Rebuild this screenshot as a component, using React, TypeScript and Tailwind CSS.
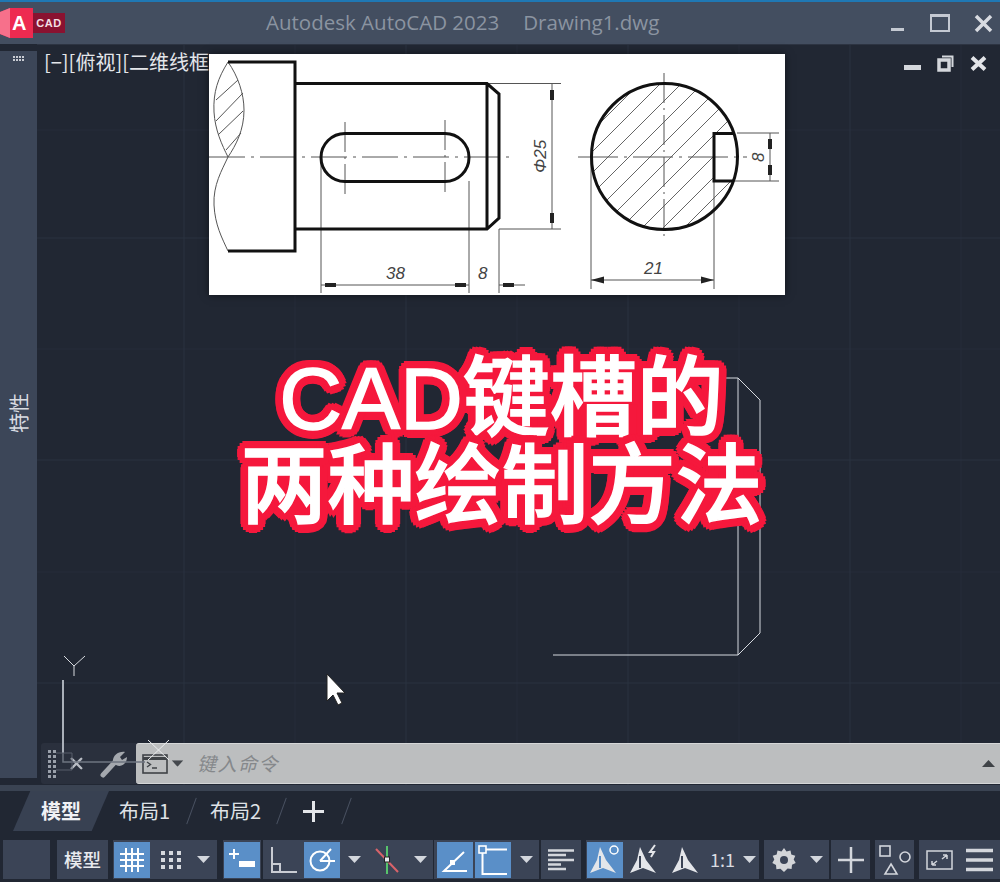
import * as React from "react"
import { X } from "lucide-react"

const Caret = ({ up = false, className = "" }: { up?: boolean; className?: string }) => (
  <svg width="13" height="7" viewBox="0 0 13 7" className={`shrink-0 ${className}`}>
    <path d={up ? "M6.5 0L13 7H0z" : "M0 0h13L6.5 7z"} fill="currentColor" />
  </svg>
)

const hatchLines = [723, 744, 765, 786, 807, 828, 849, 870, 891, 912]

const ShaftDrawing = () => (
  <svg viewBox="209 54 576 241" className="w-full h-full">
    <defs>
      <clipPath id="section">
        <circle cx="664.5" cy="156.5" r="73" />
      </clipPath>
    </defs>
    {/* hatching first, outlines sit on top */}
    <g clipPath="url(#section)" stroke="#666" strokeWidth="1">
      {hatchLines.map((c) => (
        <line key={c} x1={c - 300} y1="300" x2={c} y2="0" />
      ))}
    </g>
    <rect x="714" y="134" width="26" height="47" fill="#fff" />

    <g fill="none" stroke="#555" strokeWidth="1">
      <path d="M228 62C218 78 213 92 214 112C215 130 222 145 228 157C222 170 213 185 214 205C215 225 222 238 228 251" />
      <path d="M228 62C238 76 244 94 244 110C244 130 236 145 228 157" />
      <path d="M216 100L238 80M216 121L243 93M218 135L243 111M226 150L241 133" />
      <path d="M321 157V293M469 181V293M499 229V293" />
      <path d="M487 83.5H561M499 229H561M321 285H469M499 285H525M552 84V229" />
      <path d="M591 157V289M714 181V289M591 280H714" />
      <path d="M737 133H779M733 181H779M770 133V181" />
      <path d="M345 122V197M445 120V192M664 73V238" strokeDasharray="30 5 2 5" />
      <path d="M209 157H514" strokeDasharray="36 6 3 6" />
      <path d="M578 157H747" strokeDasharray="40 6 3 6" />
    </g>

    <g fill="none" stroke="#111" strokeWidth="3">
      <path d="M228 62H295V251H228" />
      <path d="M295 83.5H487L499 94V218L487 229H295M487 83.5V229" />
      <rect x="321" y="133.5" width="148" height="48" rx="24" />
      <circle cx="664.5" cy="156.5" r="73" />
      <path d="M733 133.5H714V181H733" />
    </g>

    <g fill="#222">
      <path d="M325 283h11v4h-11zM455 283h11v4h-11zM503 283h11v4h-11z" />
      <path d="M550 90h4v10h-4zM550 213h4v10h-4zM768 139h4v10h-4zM768 165h4v10h-4z" />
      <path d="M591 280l13-3.5v7zM714 280l-13-3.5v7z" />
    </g>

    <g fill="#444" fontStyle="italic" fontSize="17" fontFamily="'Liberation Sans', sans-serif">
      <text x="386" y="279">38</text>
      <text x="478" y="279">8</text>
      <text x="644" y="274">21</text>
      <text transform="translate(546 173) rotate(-90)">Φ25</text>
      <text transform="translate(764 162) rotate(-90)">8</text>
    </g>
  </svg>
)

const StatusGroup = ({ children, className = "" }: { children: React.ReactNode; className?: string }) => (
  <div className={`h-[39px] bg-[#3b4456] flex items-center shrink-0 ${className}`}>{children}</div>
)

const Active = ({ children, className = "" }: { children: React.ReactNode; className?: string }) => (
  <div className={`h-[36px] bg-[#5a8fc8] flex items-center justify-center shrink-0 ${className}`}>{children}</div>
)

const Drop = ({ className = "" }: { className?: string }) => <Caret className={`text-[#d3d7dd] ${className}`} />

const Annotate = ({ extra }: { extra?: React.ReactNode }) => (
  <svg width="36" height="32" viewBox="0 0 36 32" className="shrink-0">
    <path d="M13 3L19 16L29 29L16 24L3 29L10 16z" fill="#e4e6ea" />
    <path d="M13 12v12" stroke="currentColor" strokeWidth="2" />
    {extra}
  </svg>
)

const App = () => {
  return (
    <div className="relative w-[1000px] h-[882px] overflow-hidden flex flex-col bg-[#212733] font-['Noto_Sans_CJK_SC','Noto_Sans',sans-serif] text-[#e8eaee]">
      {/* Title bar */}
      <header className="h-[44px] shrink-0 flex items-center border-t-2 border-[#1f78b4] bg-[#434e60] relative">
        <div className="flex items-center">
          <svg width="33" height="30" viewBox="0 0 33 30">
            <path d="M0 4L10 0H33V30H10L0 26z" fill="#ee2a50" />
            <path d="M0 4L10 0V30L0 26z" fill="#f7708b" />
            <text x="12" y="22" fill="#fff" fontSize="20" fontWeight="700" fontFamily="'Liberation Sans', sans-serif">A</text>
          </svg>
          <div className="w-[32px] h-[20px] bg-[#8a1230] flex items-center justify-center text-[#f3dfe3] text-[11px] font-bold tracking-[0.5px] font-['Liberation_Sans',sans-serif]">CAD</div>
        </div>
        <div className="absolute left-[266px] top-[5px] flex gap-[24px] text-[20.5px] text-[#8b94a1] font-['Open_Sans',sans-serif] whitespace-nowrap">
          <span>Autodesk AutoCAD 2023</span>
          <span>Drawing1.dwg</span>
        </div>
        <div className="ml-auto flex items-center pr-[5px]">
          <div className="w-[13px] h-[3px] bg-[#c4c9d2] mt-[13px] mr-[26px]" />
          <div className="w-[20px] h-[18px] border-2 border-t-[3px] border-[#c4c9d2] mr-[24px]" />
          <svg width="19" height="19" viewBox="0 0 19 19" className="mr-[2px]">
            <path d="M2 2L17 17M17 2L2 17" stroke="#d8dbe1" strokeWidth="3.5" />
          </svg>
        </div>
      </header>

      <div className="flex-1 flex min-h-0">
        {/* Collapsed properties palette */}
        <aside className="w-[37px] shrink-0 mt-[7px] mb-[7px] bg-[#3c4658] flex flex-col items-center">
          <div className="mt-[5px] grid grid-cols-4 gap-[1px]">
            {Array.from({ length: 8 }).map((_, i) => (
              <span key={i} className="w-[2px] h-[2px] bg-[#c9ccd3]" />
            ))}
          </div>
          <div className="flex-1 flex items-center justify-center pb-[14px]">
            <span className="[writing-mode:vertical-rl] [text-orientation:sideways] rotate-180 text-[20px] text-[#d9dce2]">特性</span>
          </div>
        </aside>

        {/* Drawing canvas */}
        <main className="relative flex-1 min-w-0 border-t-[1px] border-[#2d3442]">
          <svg className="absolute inset-0 w-full h-full" viewBox="37 45 963 740" preserveAspectRatio="none">
            <g stroke="#262d3a" strokeWidth="1">
              <path d="M295 45V785M517 45V785M739 45V785M961 45V785" />
              <path d="M37 130H1000M37 349H1000M37 572H1000" />
            </g>
            <g stroke="#2b3341" strokeWidth="1">
              <path d="M184 45V785M406 45V785M628 45V785M850 45V785" />
              <path d="M37 238H1000M37 460H1000M37 683H1000" />
            </g>
            {/* model geometry */}
            <path d="M553 655H738L760 633V400L738 378H720M738 378V655" fill="none" stroke="#d5d9df" strokeWidth="1" />
            {/* cursor */}
            <path d="M327 674V701L333 695L338 705L342 703L337 693H345z" fill="#fff" stroke="#222" strokeWidth="1" />
          </svg>

          <div className="absolute left-[7px] top-[3px] text-[20px] leading-[28px] text-[#e4e6ea] whitespace-nowrap">[−][俯视][二维线框]</div>

          <div className="absolute right-[13px] top-[10px] flex items-center gap-[16px]">
            <div className="w-[17px] h-[5px] bg-[#d4d7dc] mt-[7px]" />
            <svg width="17" height="17" viewBox="0 0 17 17">
              <path d="M5 1.5H15.5V12" fill="none" stroke="#d4d7dc" strokeWidth="2" />
              <rect x="2" y="5" width="10" height="10" fill="none" stroke="#d4d7dc" strokeWidth="3.5" />
            </svg>
            <svg width="17" height="15" viewBox="0 0 17 15">
              <path d="M2 1.5L15 13.5M15 1.5L2 13.5" stroke="#e2e4e8" strokeWidth="4" />
            </svg>
          </div>

          {/* Pasted reference image */}
          <div className="absolute left-[172px] top-[9px] w-[576px] h-[241px] bg-white shadow-[0_0_8px_rgba(0,0,0,0.5)]">
            <ShaftDrawing />
          </div>

          {/* Video caption: round red outline comes from the ring of shadows */}
          <div className="absolute left-0 right-0 top-[310px] pr-[34px] text-center text-white text-[87px] leading-[88px] font-medium font-['Liberation_Sans','Noto_Sans_CJK_SC',sans-serif] [-webkit-text-stroke:1.5px_#fff] [text-shadow:8.5px_0_0_#f5183c,7.9px_3.3px_0_#f5183c,6px_6px_0_#f5183c,3.3px_7.9px_0_#f5183c,0_8.5px_0_#f5183c,-3.3px_7.9px_0_#f5183c,-6px_6px_0_#f5183c,-7.9px_3.3px_0_#f5183c,-8.5px_0_0_#f5183c,-7.9px_-3.3px_0_#f5183c,-6px_-6px_0_#f5183c,-3.3px_-7.9px_0_#f5183c,0_-8.5px_0_#f5183c,3.3px_-7.9px_0_#f5183c,6px_-6px_0_#f5183c,7.9px_-3.3px_0_#f5183c]">
            <div>CAD键槽的</div>
            <div>两种绘制方法</div>
          </div>

          {/* Command line */}
          <div className="absolute left-[4px] right-0 top-[698px] h-[41px] flex items-stretch">
            <div className="w-[95px] shrink-0 bg-[#2a303d] rounded-l-[3px] flex items-center">
              <div className="ml-[7px] grid grid-cols-2 gap-x-[2px] gap-y-[2px]">
                {Array.from({ length: 12 }).map((_, i) => (
                  <span key={i} className="w-[3px] h-[3px] bg-[#9aa0aa]" />
                ))}
              </div>
              <X size={19} strokeWidth={3} className="ml-[11px] shrink-0 text-[#b9bdc4]" />
              <svg width="28" height="28" viewBox="0 0 28 28" className="ml-[14px] shrink-0 text-[#a4a8ae]">
                <path d="M3 25L15 12" stroke="currentColor" strokeWidth="5" strokeLinecap="round" />
                <path d="M13 13C12 6 18 1 25 2L20 7L22 10L27 7C27 13 22 18 16 15z" fill="currentColor" />
              </svg>
            </div>
            <div className="flex-1 bg-[#bcbebf] border-y border-[#d5d7d8] rounded-l-[3px] flex items-center">
              <svg width="26" height="20" viewBox="0 0 26 20" className="ml-[6px]">
                <rect x="1" y="1" width="24" height="18" fill="none" stroke="#3f4347" strokeWidth="1.6" />
                <path d="M1 4.5H25" stroke="#3f4347" strokeWidth="3" />
                <path d="M5 8l3.5 2.5L5 13M10 14h5" fill="none" stroke="#3f4347" strokeWidth="1.4" />
              </svg>
              <Caret className="ml-[3px] text-[#44484d] scale-90" />
              <span className="ml-[13px] text-[19px] italic tracking-[1.5px] text-[#85888b]">键入命令</span>
              <Caret up className="ml-auto mr-[5px] text-[#3f4347]" />
            </div>
          </div>

          {/* UCS icon sits above the command line */}
          <svg className="absolute inset-0 w-full h-full pointer-events-none" viewBox="37 45 963 740" preserveAspectRatio="none">
            <g fill="none" strokeWidth="1">
              <path d="M63 680V753" stroke="#aab0b9" strokeWidth="2" />
              <path d="M63 753V762H145" stroke="#6d7480" strokeWidth="1.5" />
              <path d="M56 753H72V770H56" stroke="#565d6a" />
              <path d="M64 656L74 666L85 656M74 666V676" stroke="#d8dbe0" />
              <path d="M148 740L169 760M169 740L148 760" stroke="#eceef0" />
            </g>
          </svg>
        </main>
      </div>

      {/* Layout tabs */}
      <nav className="h-[50px] shrink-0 flex items-start bg-[#212733] border-t-[6px] border-[#3a4352] text-[20px]">
        <div className="ml-[13px] w-[96px] h-[40px] bg-[#384152] [clip-path:polygon(18%_0,100%_0,82%_100%,0_100%)] flex items-center justify-center font-bold text-[#f0f1f4]">模型</div>
        <div className="h-[40px] flex items-center">
          <span className="ml-[10px] text-[#dfe2e7]">布局1</span>
          <span className="ml-[21px] w-px h-[28px] bg-[#4a5262] rotate-[20deg]" />
          <span className="ml-[18px] text-[#dfe2e7]">布局2</span>
          <span className="ml-[20px] w-px h-[28px] bg-[#4a5262] rotate-[20deg]" />
          <svg width="21" height="21" viewBox="0 0 21 21" className="ml-[21px]">
            <path d="M10.5 0V21M0 10.5H21" stroke="#e4e6ea" strokeWidth="3" />
          </svg>
          <span className="ml-[22px] w-px h-[28px] bg-[#4a5262] rotate-[20deg]" />
        </div>
      </nav>

      {/* Status bar */}
      <footer className="h-[47px] shrink-0 flex items-start pt-[5px] pl-[3px] bg-[#212733]">
        <div className="h-[39px] w-[47px] shrink-0 bg-[#3b4456]" />
        <StatusGroup className="w-[51px] ml-[7px] justify-center text-[18.5px] font-medium text-[#e8eaee]">模型</StatusGroup>
        <StatusGroup className="w-[104px] ml-[5px] px-[1px]">
          <Active className="w-[36px]">
            <svg width="26" height="26" viewBox="0 0 26 26">
              <path d="M7 1V25M13 1V25M19 1V25M1 7H25M1 13H25M1 19H25" stroke="#fff" strokeWidth="2" />
            </svg>
          </Active>
          <svg width="22" height="22" viewBox="0 0 22 22" className="ml-[10px] shrink-0">
            {[2, 9, 16].map((y) => [1, 9, 17].map((x) => <rect key={`${x}-${y}`} x={x} y={y} width="4" height="4" fill="#d6d9de" />))}
          </svg>
          <Drop className="ml-[15px]" />
        </StatusGroup>
        <StatusGroup className="w-[38px] ml-[6px] px-[1px]">
          <Active className="w-[36px]">
            <svg width="28" height="26" viewBox="0 0 28 26">
              <path d="M1 7H11M6 2V12" stroke="#fff" strokeWidth="2" />
              <rect x="11" y="14" width="16" height="6" fill="#fff" />
            </svg>
          </Active>
        </StatusGroup>
        <StatusGroup className="w-[170px] ml-[2px]">
          <svg width="28" height="28" viewBox="0 0 28 28" className="ml-[7px] shrink-0">
            <path d="M2 1V26H27M2 18H10V26" fill="none" stroke="#c9ccd3" strokeWidth="2" />
          </svg>
          <Active className="w-[36px] ml-[6px]">
            <svg width="28" height="28" viewBox="0 0 28 28">
              <circle cx="12" cy="15" r="9.5" fill="none" stroke="#fff" strokeWidth="2" />
              <path d="M12 15H27M12 15L23 3" stroke="#fff" strokeWidth="2" />
            </svg>
          </Active>
          <Drop className="ml-[8px]" />
          <svg width="26" height="28" viewBox="0 0 26 28" className="ml-[14px] shrink-0">
            <path d="M12 0V28" stroke="#57c46c" strokeWidth="2" />
            <path d="M1 3L23 26" stroke="#d9636a" strokeWidth="2" />
            <rect x="9.5" y="11" width="5" height="5" fill="#e8eaee" stroke="#222" />
          </svg>
          <Drop className="ml-[13px]" />
        </StatusGroup>
        <StatusGroup className="w-[105px] ml-[1px]">
          <Active className="w-[36px] ml-[3px]">
            <svg width="28" height="26" viewBox="0 0 28 26">
              <path d="M26 24H3L23 5" fill="none" stroke="#fff" strokeWidth="2" />
              <rect x="9" y="13" width="5" height="5" fill="#fff" />
            </svg>
          </Active>
          <Active className="w-[36px] ml-[2px]">
            <svg width="30" height="30" viewBox="0 0 30 30">
              <rect x="1" y="1" width="7" height="7" fill="none" stroke="#fff" strokeWidth="1.6" />
              <path d="M8 4.5H29M4.5 8V29H29" fill="none" stroke="#fff" strokeWidth="2" />
            </svg>
          </Active>
          <Drop className="ml-[9px]" />
        </StatusGroup>
        <StatusGroup className="w-[40px] ml-[2px] justify-center">
          <svg width="26" height="22" viewBox="0 0 26 22">
            <path d="M0 1.5H26M0 6H18M0 11H26M0 15.5H13M0 20H18" stroke="#d3d6dc" strokeWidth="2.5" />
          </svg>
        </StatusGroup>
        <StatusGroup className="w-[173px] ml-[5px] px-[1px] text-[#5a8fc8]">
          <Active className="w-[36px]"><Annotate extra={<circle cx="27" cy="6" r="4" fill="none" stroke="#fff" strokeWidth="1.5" />} /></Active>
          <span className="ml-[4px] text-[#3b4456]"><Annotate extra={<path d="M28 1L23 8H27L24 13" fill="none" stroke="#e4e6ea" strokeWidth="2" />} /></span>
          <span className="ml-[6px] text-[#3b4456]"><Annotate /></span>
          <span className="ml-[5px] text-[18px] text-[#d9dce2]">1:1</span>
          <Drop className="ml-[8px]" />
        </StatusGroup>
        <StatusGroup className="w-[65px] ml-[5px]">
          <svg width="26" height="26" viewBox="0 0 26 26" className="ml-[7px] shrink-0">
            <path d="M13 1l2.5 3.5 4-1 .8 4 4 1.2-1.6 3.8 2 3.5-3.7 1.8-.4 4.2-4-.6L13 25l-3.6-3.3-4 .6-.4-4.2L1.3 16l2-3.5-1.6-3.8 4-1.2.8-4 4 1z" fill="#d3d5d8" />
            <circle cx="13" cy="13" r="4" fill="#3b4456" />
          </svg>
          <Drop className="ml-[13px]" />
        </StatusGroup>
        <StatusGroup className="w-[39px] ml-[2px] justify-center">
          <svg width="26" height="26" viewBox="0 0 26 26">
            <path d="M13 0V26M0 13H26" stroke="#d3d6dc" strokeWidth="2.5" />
          </svg>
        </StatusGroup>
        <StatusGroup className="w-[39px] ml-[5px] justify-center">
          <svg width="32" height="30" viewBox="0 0 32 30">
            <rect x="1" y="1" width="10" height="10" fill="none" stroke="#d3d6dc" strokeWidth="1.6" />
            <circle cx="26" cy="12" r="5" fill="none" stroke="#d3d6dc" strokeWidth="1.6" />
            <path d="M12 19L18 29H6z" fill="none" stroke="#d3d6dc" strokeWidth="1.6" />
          </svg>
        </StatusGroup>
        <StatusGroup className="w-[81px] ml-[5px] pl-[7px] gap-[13px]">
          <svg width="27" height="20" viewBox="0 0 27 20" className="shrink-0">
            <rect x="1" y="1" width="25" height="18" fill="none" stroke="#d3d6dc" strokeWidth="1.5" />
            <path d="M6 15L11 11M6 15V11M6 15H10M21 5L16 9M21 5V9M21 5H17" fill="none" stroke="#d3d6dc" strokeWidth="1.5" />
          </svg>
          <svg width="27" height="24" viewBox="0 0 27 24" className="shrink-0">
            <path d="M0 2.5H27M0 12H27M0 21.5H27" stroke="#d3d6dc" strokeWidth="3.5" />
          </svg>
        </StatusGroup>
      </footer>
    </div>
  )
}

export default App
